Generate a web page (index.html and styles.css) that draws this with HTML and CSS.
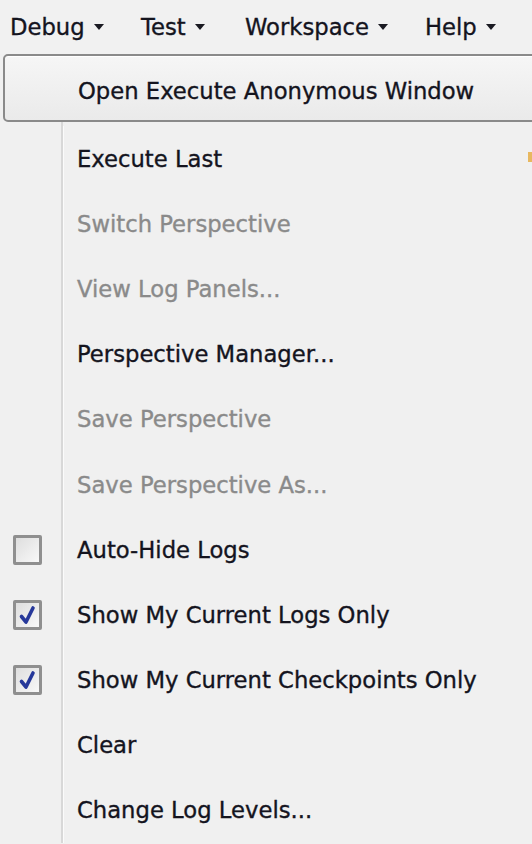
FILE: index.html
```html
<!DOCTYPE html>
<html>
<head>
<meta charset="utf-8">
<link rel="stylesheet" href="styles.css">
</head>
<body>
<div class="page">
  <div class="menubar">
    <div class="top-item top-debug">Debug<span class="caret"></span></div>
    <div class="top-item top-test">Test<span class="caret"></span></div>
    <div class="top-item top-ws">Workspace<span class="caret"></span></div>
    <div class="top-item top-help">Help<span class="caret"></span></div>
  </div>
  <div class="head-btn">Open Execute Anonymous Window</div>
  <div class="list">
    <div class="row"><div class="gutter"></div><div class="label">Execute Last</div><span class="edge-glow"></span></div>
    <div class="row disabled"><div class="gutter"></div><div class="label">Switch Perspective</div></div>
    <div class="row disabled"><div class="gutter"></div><div class="label">View Log Panels...</div></div>
    <div class="row"><div class="gutter"></div><div class="label">Perspective Manager...</div></div>
    <div class="row disabled"><div class="gutter"></div><div class="label">Save Perspective</div></div>
    <div class="row disabled"><div class="gutter"></div><div class="label">Save Perspective As...</div></div>
    <div class="row"><div class="gutter"><span class="check"></span></div><div class="label">Auto-Hide Logs</div></div>
    <div class="row"><div class="gutter"><span class="check">
      <svg viewBox="0 0 23 24" width="23" height="24"><path d="M5.5 13.5 L10 19 L17 5" fill="none" stroke="#26389a" stroke-width="3.6" stroke-linecap="round" stroke-linejoin="round"/></svg>
    </span></div><div class="label">Show My Current Logs Only</div></div>
    <div class="row"><div class="gutter"><span class="check">
      <svg viewBox="0 0 23 24" width="23" height="24"><path d="M5.5 13.5 L10 19 L17 5" fill="none" stroke="#26389a" stroke-width="3.6" stroke-linecap="round" stroke-linejoin="round"/></svg>
    </span></div><div class="label">Show My Current Checkpoints Only</div></div>
    <div class="row"><div class="gutter"></div><div class="label">Clear</div></div>
    <div class="row"><div class="gutter"></div><div class="label">Change Log Levels...</div></div>
  </div>
</div>
</body>
</html>
```
FILE: styles.css
```css
html, body {
  margin: 0;
  padding: 0;
  background: #f0f0f0;
}
.page {
  width: 532px;
  height: 844px;
  overflow: hidden;
  background: #f0f0f0;
  font-family: "DejaVu Sans", Verdana, sans-serif;
  font-size: 22.7px;
  color: #14141e;
  -webkit-text-stroke: 0.35px currentColor;
}
.menubar {
  height: 54px;
  display: flex;
  align-items: center;
  padding-left: 10px;
  box-sizing: border-box;
  background: #f1f1f1;
}
.top-item {
  display: flex;
  align-items: center;
}
.top-debug { width: 131px; }
.top-test { width: 104px; }
.top-ws { width: 180px; }
.caret {
  display: inline-block;
  width: 0;
  height: 0;
  margin-left: 9px;
  border-left: 5px solid transparent;
  border-right: 5px solid transparent;
  border-top: 6px solid #1a1a22;
}
.head-btn {
  margin-left: 3px;
  width: 540px;
  height: 68px;
  box-sizing: border-box;
  border: 2px solid #8a8a8a;
  border-radius: 5px;
  background: linear-gradient(#f6f6f6, #eaeaea);
  box-shadow: inset 0 1px 0 #ffffff;
  display: flex;
  align-items: center;
  padding-left: 73px;
  padding-top: 6px;
}
.list {
  padding-top: 4px;
}
.row {
  position: relative;
  display: flex;
  height: 65.2px;
  align-items: center;
}
.gutter {
  width: 63px;
  align-self: stretch;
  box-sizing: border-box;
  border-right: 2px solid #d8d8d8;
  display: flex;
  align-items: center;
  padding-left: 13px;
}
.list .row:first-child .gutter {
  margin-top: -4px;
  padding-top: 4px;
  height: calc(100% + 4px);
}
.label {
  padding-left: 13px;
  border-left: 1px solid #fbfbfb;
  align-self: stretch;
  display: flex;
  align-items: center;
}
.disabled .label {
  color: #8a8a8a;
}
.check {
  width: 29px;
  height: 30px;
  box-sizing: border-box;
  border: 3px solid #8f8f8f;
  border-radius: 2px;
  background: linear-gradient(135deg, #dedede, #f8f8f8);
  display: flex;
  align-items: center;
  justify-content: center;
}
.check svg {
  display: block;
}
.edge-glow {
  position: absolute;
  right: 0;
  top: 26px;
  width: 4px;
  height: 10px;
  background: #e8b860;
}
```
